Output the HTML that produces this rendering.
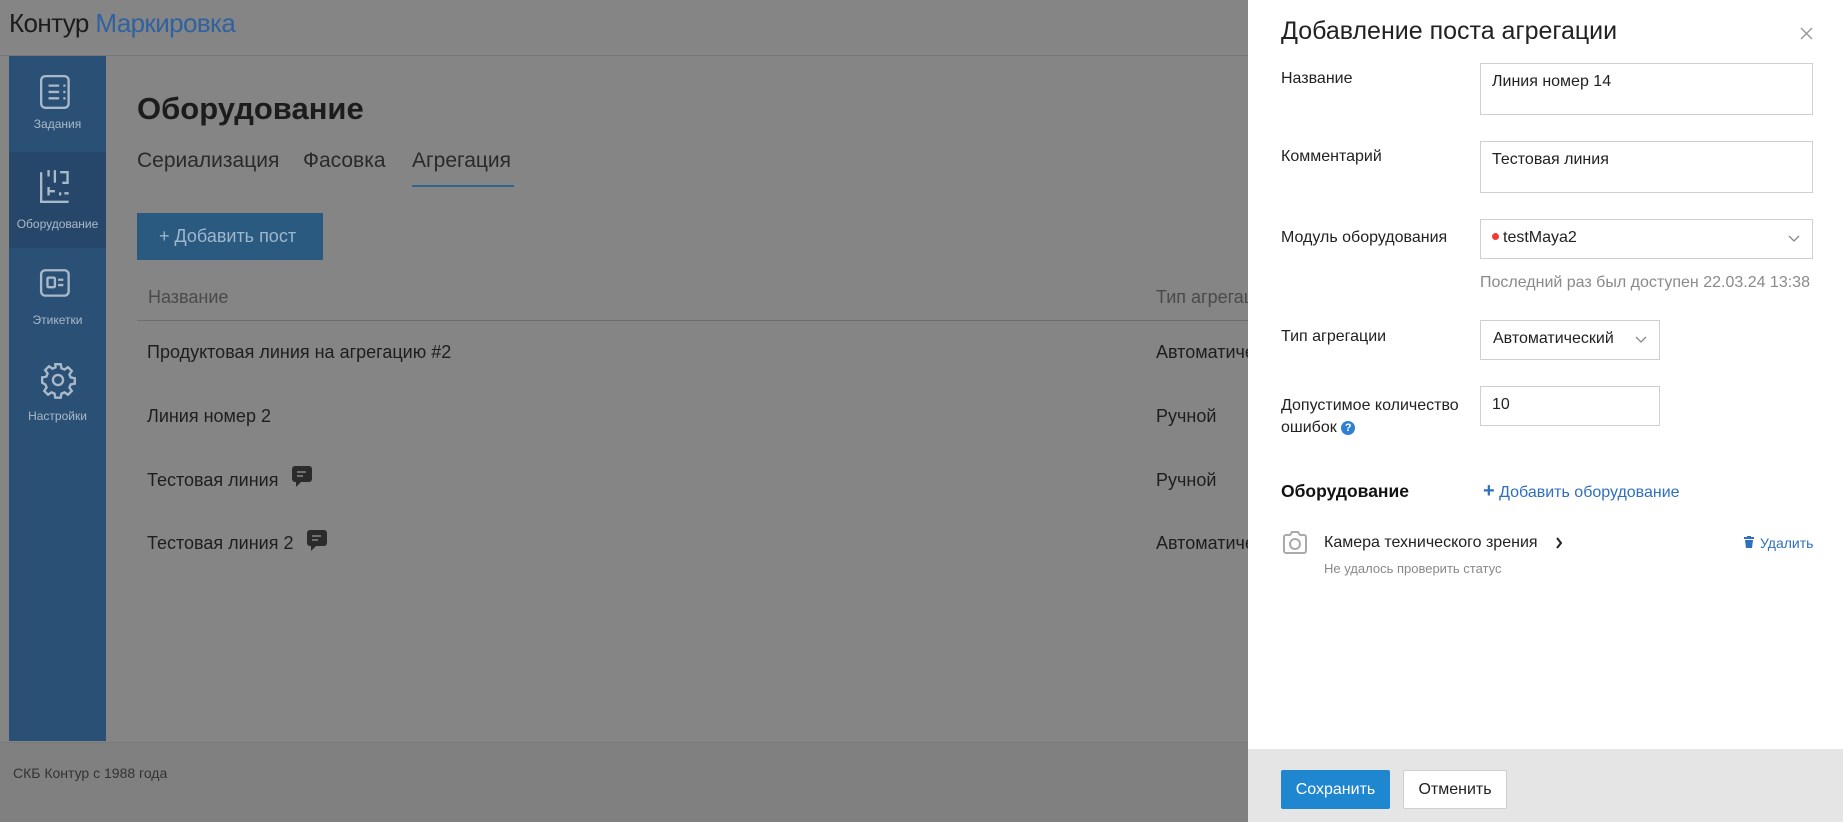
<!DOCTYPE html>
<html><head><meta charset="utf-8">
<style>
*{box-sizing:border-box;margin:0;padding:0}
body{width:1843px;height:822px;overflow:hidden;background:#858585;font-family:"Liberation Sans","Noto Sans CJK SC",sans-serif;color:#1e1e1e;position:relative}
.a{position:absolute;white-space:nowrap}
.side{position:absolute;left:9px;top:56px;width:97px;height:685px;background:#2b5075}
.si{position:absolute;left:0;width:97px;text-align:center;font-size:12px;color:#a9b9c9}
.lbl{position:absolute;left:1281px;font-size:16px;color:#222}
.inp{position:absolute;border:1px solid #cfcfcf;background:#fff;font-size:16px;color:#222;padding:9px 11px}
</style></head><body>
<div class="a" style="left:9px;top:8px;font-size:26px;letter-spacing:-0.6px"><span style="color:#1c1c1c">Контур</span><span style="color:#2f62a0"> Маркировка</span></div>
<div class="a" style="left:0;top:55px;width:1248px;height:1px;background:#777"></div>
<div class="side">
 <div style="position:absolute;left:0;top:96px;width:97px;height:96px;background:#264769"></div>
 <svg class="a" style="left:30px;top:18px" width="36" height="38" viewBox="0 0 34 36" fill="none" stroke="#a9b9c9" stroke-width="2.2"><rect x="2" y="2" width="26" height="30" rx="4"/><path d="M9 11h10M23 11h2M9 17h10M23 17h2M9 23h10M23 23h2"/></svg>
 <div class="si" style="top:61px">Задания</div>
 <svg class="a" style="left:30px;top:112px" width="36" height="38" viewBox="0 0 34 36" fill="none" stroke="#a9b9c9" stroke-width="2.2"><path d="M2 4v28h26M9 2v6M15 2v12M20 4h7v10h-5M9 22h6M9 18v8M20 23v3M24 24h4"/></svg>
 <div class="si" style="top:161px">Оборудование</div>
 <svg class="a" style="left:30px;top:212px" width="36" height="32" viewBox="0 0 34 30" fill="none" stroke="#a9b9c9" stroke-width="2.2"><rect x="2" y="2" width="26" height="24" rx="4"/><rect x="8" y="9" width="7" height="9" rx="1"/><path d="M18 11h5M18 16h5"/></svg>
 <div class="si" style="top:257px">Этикетки</div>
 <svg class="a" style="left:30px;top:305px" width="38" height="38" viewBox="0 0 24 24" fill="none" stroke="#a9b9c9" stroke-width="1.5"><circle cx="12" cy="12" r="3.2"/><path d="M10.3 2h3.4l.5 2.6 1.9.8 2.2-1.5 2.4 2.4-1.5 2.2.8 1.9 2.6.5v3.4l-2.6.5-.8 1.9 1.5 2.2-2.4 2.4-2.2-1.5-1.9.8-.5 2.6h-3.4l-.5-2.6-1.9-.8-2.2 1.5-2.4-2.4 1.5-2.2-.8-1.9L2 13.7v-3.4l2.6-.5.8-1.9-1.5-2.2 2.4-2.4 2.2 1.5 1.9-.8z"/></svg>
 <div class="si" style="top:353px">Настройки</div>
</div>
<div class="a" style="left:137px;top:91px;font-size:31px;font-weight:bold;color:#1c1c1c">Оборудование</div>
<div class="a" style="left:137px;top:149px;font-size:21px;color:#2a2a2a">Сериализация</div>
<div class="a" style="left:303px;top:149px;font-size:21px;color:#2a2a2a">Фасовка</div>
<div class="a" style="left:412px;top:149px;font-size:21px;color:#2a2a2a">Агрегация</div>
<div class="a" style="left:412px;top:185px;width:102px;height:2px;background:#2e6690"></div>
<div class="a" style="left:137px;top:213px;width:186px;height:47px;background:#2b5a80;color:#9fb6cb;font-size:18px;line-height:47px;padding-left:22px">+ Добавить пост</div>
<div class="a" style="left:148px;top:287px;font-size:18px;color:#4a4a4a">Название</div>
<div class="a" style="left:1156px;top:287px;font-size:18px;color:#4a4a4a">Тип агрегации</div>
<div class="a" style="left:137px;top:320px;width:1111px;height:1px;background:#6e6e6e"></div>
<div class="a" style="left:147px;top:342px;font-size:18px">Продуктовая линия на агрегацию #2</div>
<div class="a" style="left:147px;top:406px;font-size:18px">Линия номер 2</div>
<div class="a" style="left:147px;top:470px;font-size:18px">Тестовая линия</div>
<div class="a" style="left:147px;top:533px;font-size:18px">Тестовая линия 2</div>
<div class="a" style="left:1156px;top:342px;font-size:18px">Автоматический</div>
<div class="a" style="left:1156px;top:406px;font-size:18px">Ручной</div>
<div class="a" style="left:1156px;top:470px;font-size:18px">Ручной</div>
<div class="a" style="left:1156px;top:533px;font-size:18px">Автоматический</div>
<svg class="a" style="left:292px;top:466px" width="20" height="22" viewBox="0 0 20 22"><rect x="0" y="0" width="20" height="16" rx="3" fill="#2b2b2b"/><path d="M4 15v6l6-6z" fill="#2b2b2b"/><path d="M5 6h9M5 10h6" stroke="#888" stroke-width="1.6"/></svg>
<svg class="a" style="left:307px;top:530px" width="20" height="22" viewBox="0 0 20 22"><rect x="0" y="0" width="20" height="16" rx="3" fill="#2b2b2b"/><path d="M4 15v6l6-6z" fill="#2b2b2b"/><path d="M5 6h9M5 10h6" stroke="#888" stroke-width="1.6"/></svg>
<div class="a" style="left:0;top:742px;width:1248px;height:1px;background:#7a7a7a"></div>
<div class="a" style="left:0;top:743px;width:1248px;height:79px;background:#808080"></div>
<div class="a" style="left:13px;top:765px;font-size:14px;color:#333">СКБ Контур с 1988 года</div>

<div class="a" style="left:1248px;top:0;width:595px;height:822px;background:#fff"></div>
<div class="a" style="left:1248px;top:749px;width:595px;height:73px;background:#e5e5e5"></div>
<div class="a" style="left:1281px;top:17px;font-size:25px;color:#222">Добавление поста агрегации</div>
<svg class="a" style="left:1800px;top:27px" width="13" height="13" viewBox="0 0 13 13" stroke="#999" stroke-width="1.5"><path d="M1 1l11 11M12 1L1 12"/></svg>
<div class="lbl" style="top:70px">Название</div>
<div class="inp" style="left:1480px;top:63px;width:333px;height:52px">Линия номер 14</div>
<div class="lbl" style="top:148px">Комментарий</div>
<div class="inp" style="left:1480px;top:141px;width:333px;height:52px">Тестовая линия</div>
<div class="lbl" style="top:229px">Модуль оборудования</div>
<div class="inp" style="left:1480px;top:219px;width:333px;height:40px"><span style="display:inline-block;width:7px;height:7px;border-radius:50%;background:#f03b36;vertical-align:2px;margin-right:4px"></span>testMaya2</div>
<svg class="a" style="left:1788px;top:235px" width="12" height="8" viewBox="0 0 12 8" fill="none" stroke="#888" stroke-width="1.3"><path d="M1 1l5 5 5-5"/></svg>
<div class="a" style="left:1480px;top:274px;font-size:16px;color:#8a8a8a">Последний раз был доступен 22.03.24 13:38</div>
<div class="lbl" style="top:328px">Тип агрегации</div>
<div class="inp" style="left:1480px;top:320px;width:180px;height:40px;padding-left:12px">Автоматический</div>
<svg class="a" style="left:1635px;top:336px" width="12" height="8" viewBox="0 0 12 8" fill="none" stroke="#888" stroke-width="1.3"><path d="M1 1l5 5 5-5"/></svg>
<div class="lbl" style="top:395px;line-height:22px">Допустимое количество<br>ошибок <span style="display:inline-block;width:14px;height:14px;border-radius:50%;background:#2f80d0;color:#fff;font-size:11px;line-height:14px;text-align:center;font-weight:bold;vertical-align:1px">?</span></div>
<div class="inp" style="left:1480px;top:386px;width:180px;height:40px">10</div>
<div class="a" style="left:1281px;top:481px;font-size:17.5px;font-weight:bold;color:#111">Оборудование</div>
<div class="a" style="left:1483px;top:483px;font-size:16px;color:#2e6fc0"><span style="font-size:20px;font-weight:bold;line-height:16px">+</span> Добавить оборудование</div>
<svg class="a" style="left:1281px;top:528px" width="28" height="28" viewBox="0 0 28 28" fill="none" stroke="#aaa" stroke-width="2"><path d="M3 9a2 2 0 0 1 2-2h4l2-3h6l2 3h4a2 2 0 0 1 2 2v14a2 2 0 0 1-2 2H5a2 2 0 0 1-2-2z"/><circle cx="14" cy="16" r="5"/></svg>
<div class="a" style="left:1324px;top:534px;font-size:16px;color:#222">Камера технического зрения</div>
<svg class="a" style="left:1555px;top:537px" width="8" height="12" viewBox="0 0 8 12" fill="none" stroke="#222" stroke-width="2"><path d="M2 1l4 5-4 5"/></svg>
<div class="a" style="left:1324px;top:561px;font-size:13px;color:#888">Не удалось проверить статус</div>
<svg class="a" style="left:1744px;top:536px" width="10" height="12" viewBox="0 0 10 12" fill="#2e6fc0"><rect x="0" y="1" width="10" height="2"/><rect x="3" y="0" width="4" height="2"/><path d="M1 4h8l-1 8H2z"/></svg>
<div class="a" style="left:1760px;top:535px;font-size:14px;color:#2e6fc0">Удалить</div>
<div class="a" style="left:1281px;top:770px;width:109px;height:39px;background:#1f86d0;color:#fff;font-size:16px;line-height:39px;text-align:center;border-radius:2px">Сохранить</div>
<div class="a" style="left:1403px;top:770px;width:104px;height:39px;background:#fff;border:1px solid #cfcfcf;color:#222;font-size:16px;line-height:37px;text-align:center;border-radius:2px">Отменить</div>
</body></html>
